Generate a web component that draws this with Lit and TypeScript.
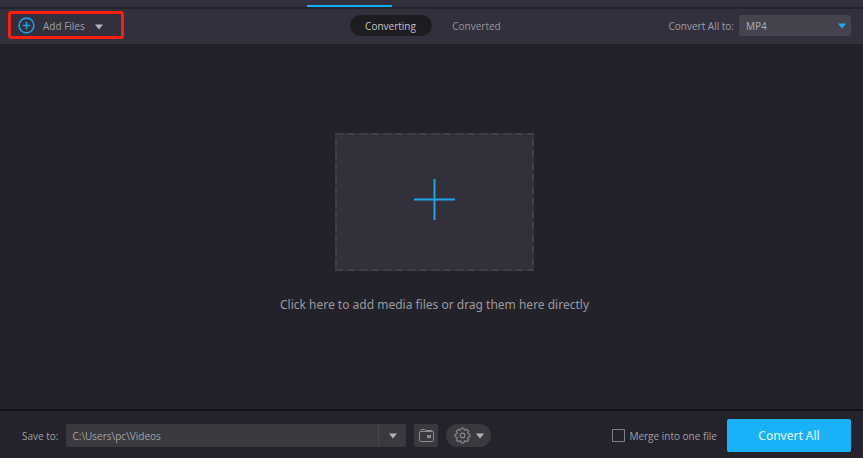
import { LitElement, html, css, svg } from "lit";
import { customElement, state } from "lit/decorators.js";

const arrow = html`<svg class="arrow" width="8" height="6" viewBox="0 0 8 6" aria-hidden="true">
  <path d="M0 .5h8L4 5.5z" fill="currentColor" />
</svg>`;

/* Outline of the settings gear: eight rounded teeth around the centre (9, 9). */
const gearPath = (() => {
  const at = (radius: number, degrees: number) => {
    const a = (degrees * Math.PI) / 180;
    return `${(9 + radius * Math.cos(a)).toFixed(2)} ${(9 + radius * Math.sin(a)).toFixed(2)}`;
  };
  let d = "";
  for (let i = 0; i < 8; i++) {
    const c = i * 45;
    d += `${i ? "L" : "M"}${at(6.2, c - 17)}L${at(8, c - 10)}L${at(8, c + 10)}L${at(6.2, c + 17)}`;
  }
  return d + "Z";
})();

@customElement("app-root")
export class AppRoot extends LitElement {
  static styles = css`
    :host {
      display: flex;
      flex-direction: column;
      min-height: 100vh;
      background: #23222b;
      color: #a09fa6;
      font: 10px/16px "Open Sans", "Noto Sans", sans-serif;
    }
    * {
      box-sizing: border-box;
    }
    button,
    input,
    select {
      margin: 0;
      padding: 0;
      border: 0;
      background: none;
      color: inherit;
      font: inherit;
    }
    svg {
      display: block;
      flex: none;
    }
    .strip {
      display: flex;
      align-items: flex-end;
      height: 9px;
      background: #31303c;
      border-bottom: 2px solid #25242b;
    }
    .marker {
      width: 85px;
      height: 2px;
      margin-left: 307px;
      background: #13b0f8;
    }
    .toolbar {
      display: grid;
      grid-template-columns: 1fr auto 1fr;
      align-items: center;
      height: 35px;
      padding: 0 12px 2px 16px;
      background: #31303c;
    }
    .add {
      position: relative;
      justify-self: start;
      display: flex;
      align-items: center;
      gap: 8px;
      height: 24px;
      padding: 0 2px;
    }
    .add .arrow {
      margin: 2px 0 0 2px;
      color: #b4b3b9;
    }
    .add::after {
      content: "";
      position: absolute;
      inset: -3px -19px -1px -8px;
      border: 3px solid #fc1f10;
      border-radius: 3px;
    }
    .tabs {
      display: flex;
      gap: 4px;
    }
    .tab {
      width: 82px;
      height: 21px;
      border-radius: 11px;
      color: #96959c;
    }
    .tab.on {
      background: #1d1c21;
      color: #c6c5c9;
    }
    .format {
      justify-self: end;
      display: flex;
      align-items: center;
      gap: 5px;
    }
    .select {
      display: grid;
      align-items: center;
      width: 112px;
    }
    .select > * {
      grid-area: 1 / 1;
    }
    .select select {
      appearance: none;
      height: 21px;
      padding: 0 24px 0 7px;
      border-radius: 3px;
      background: #45444e;
      color: #b0afb5;
    }
    .select .arrow {
      justify-self: end;
      margin: 1px 5px 0 0;
      color: #1fa9ee;
      pointer-events: none;
    }
    main {
      flex: 1;
      display: flex;
      flex-direction: column;
      align-items: center;
      justify-content: center;
      padding: 0 0 6px 6px;
    }
    .drop {
      display: grid;
      place-items: center;
      width: 199px;
      height: 138px;
      background: #31303b;
    }
    .drop > * {
      grid-area: 1 / 1;
    }
    .drop .edge {
      width: 100%;
      height: 100%;
    }
    .drop .plus {
      margin-bottom: 4px;
    }
    .hint {
      margin: 24px 0 0;
      font: 12px/20px "Noto Sans", sans-serif;
      color: #9a999e;
    }
    footer {
      display: flex;
      align-items: center;
      justify-content: space-between;
      height: 49px;
      padding: 2px 12px 0 22px;
      border-top: 2px solid #151419;
      background: #24232b;
    }
    .group {
      display: flex;
      align-items: center;
      gap: 8px;
    }
    .path {
      display: flex;
      width: 340px;
      height: 23px;
      border-radius: 2px;
      background: #3a393f;
      color: #a3a2a7;
    }
    .path input {
      flex: 1;
      min-width: 0;
      padding: 0 6px;
    }
    .path button {
      display: grid;
      place-items: center;
      width: 28px;
      border-left: 1px solid #47464c;
    }
    .path .arrow,
    .gear .arrow {
      color: #b4b3b8;
    }
    .folder {
      display: grid;
      place-items: center;
      width: 24px;
      height: 23px;
      border-radius: 2px;
      background: #3a393f;
      color: #8e8d93;
    }
    .gear {
      display: flex;
      align-items: center;
      justify-content: center;
      gap: 5px;
      width: 45px;
      height: 23px;
      border-radius: 12px;
      background: #3a393f;
      color: #8e8d93;
    }
    .merge {
      display: flex;
      align-items: center;
      gap: 4px;
      margin-right: 2px;
    }
    .merge input {
      appearance: none;
      width: 13px;
      height: 13px;
      border: 1px solid #7e7d83;
    }
    .merge input:checked {
      background: #1ab1fb;
    }
    .convert {
      width: 124px;
      height: 33px;
      border-radius: 2px;
      background: #1ab1fb;
      color: #e9f7ff;
      font: 12px/20px "Noto Sans", sans-serif;
    }
  `;

  @state() private tab = "Converting";

  render() {
    return html`
      <div class="strip"><div class="marker"></div></div>
      <header class="toolbar">
        <button class="add">
          <svg width="17" height="17" viewBox="0 0 17 17" fill="none" stroke="#209fe0" stroke-width="1.6" aria-hidden="true">
            <circle cx="8.5" cy="8.5" r="7.4" />
            <path d="M8.5 4.8v7.4M4.8 8.5h7.4" />
          </svg>
          <span>Add Files</span>
          ${arrow}
        </button>
        <nav class="tabs">
          ${["Converting", "Converted"].map(
            (name) => html`<button class="tab ${name === this.tab ? "on" : ""}" @click=${() => (this.tab = name)}>${name}</button>`
          )}
        </nav>
        <div class="format">
          <label for="format">Convert All to:</label>
          <div class="select">
            <select id="format">
              <option>MP4</option>
            </select>
            ${arrow}
          </div>
        </div>
      </header>
      <main>
        <button class="drop" aria-labelledby="hint">
          <svg class="edge" aria-hidden="true">
            <rect width="100%" height="100%" fill="none" stroke="#403f48" stroke-width="4" stroke-dasharray="8 4" />
          </svg>
          <svg class="plus" width="41" height="41" viewBox="0 0 41 41" aria-hidden="true">
            <path d="M20.5 0v41M0 20.5h41" stroke="#20a6ea" stroke-width="2" />
          </svg>
        </button>
        <p class="hint" id="hint">Click here to add media files or drag them here directly</p>
      </main>
      <footer>
        <div class="group">
          <label for="path">Save to:</label>
          <div class="path">
            <input id="path" type="text" value="C:\\Users\\pc\\Videos" />
            <button aria-label="Recent folders">${arrow}</button>
          </div>
          <button class="folder" aria-label="Open folder">
            <svg width="15" height="13" viewBox="0 0 15 13" fill="none" stroke="currentColor" aria-hidden="true">
              <path d="M1.5 2.5V1.5q0-1 1-1h3.3l1 1h6q.7 0 .7 1" />
              <rect x=".5" y="2.5" width="14" height="10" rx="1" />
              <rect x="8" y="6" width="4" height="3" fill="currentColor" stroke="none" />
            </svg>
          </button>
          <button class="gear" aria-label="Settings">
            <svg width="17" height="17" viewBox="0 0 18 18" fill="none" stroke="currentColor" stroke-width="1.2" stroke-linejoin="round" aria-hidden="true">
              ${svg`<path d=${gearPath} />`}
              <circle cx="9" cy="9" r="2.5" />
            </svg>
            ${arrow}
          </button>
        </div>
        <div class="group">
          <label class="merge"><input type="checkbox" />Merge into one file</label>
          <button class="convert">Convert All</button>
        </div>
      </footer>
    `;
  }
}
